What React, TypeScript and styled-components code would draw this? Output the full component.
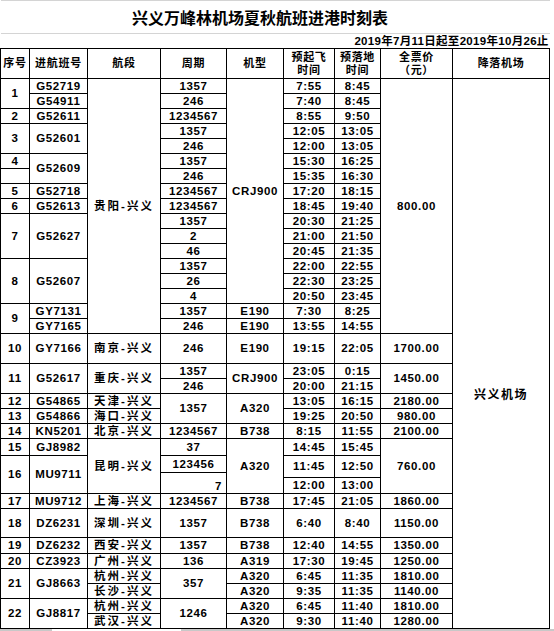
import styled, { createGlobalStyle } from 'styled-components';

const GlobalStyle = createGlobalStyle`
  html, body {
    margin: 0;
    padding: 0;
    background: #fff;
    overflow: hidden;
  }
`;

const Sheet = styled.div`
  width: 554px;
  height: 631px;
  display: flex;
  flex-direction: column;
  overflow: hidden;
  font-family: "Liberation Sans", "Noto Sans CJK SC", sans-serif;
  color: #000;
`;

const Grid = styled.table`
  border-collapse: collapse;
  table-layout: fixed;
  width: 554px;
  flex: none;
`;

const Row = styled.tr<{ $h: number }>`
  height: ${({ $h }) => $h}px;
`;

const TitleCell = styled.td`
  height: 32px;
  padding: 0 30px 0 0;
  border-top: 1px solid #d4d4d4;
  border-bottom: 1px solid #d4d4d4;
  text-align: center;
  vertical-align: middle;
  font-family: "Noto Sans CJK SC", sans-serif;
  font-size: 16px;
  font-weight: 700;
  line-height: 20px;
`;

const DateCell = styled.td`
  padding: 0 1px 0 0;
  border-bottom: 1px solid #000;
  text-align: right;
  vertical-align: middle;
  font-size: 11.5px;
  font-weight: 700;
  letter-spacing: 0.3px;
  line-height: 14px;
  white-space: nowrap;
`;

const Head = styled.th`
  padding: 0;
  border: 1px solid #000;
  text-align: center;
  vertical-align: middle;
  font-size: 11px;
  font-weight: 700;
  letter-spacing: 0.7px;
  line-height: 13px;
  white-space: pre-line;
`;

const Cell = styled.td<{ $ls?: number; $right?: boolean; $bottom?: boolean }>`
  padding: 0 ${({ $right }) => ($right ? '4px' : '0')} 0 0;
  border: 1px solid #000;
  text-align: ${({ $right }) => ($right ? 'right' : 'center')};
  vertical-align: ${({ $bottom }) => ($bottom ? 'bottom' : 'middle')};
  font-size: 11.5px;
  font-weight: 700;
  letter-spacing: ${({ $ls }) => $ls ?? 0.6}px;
  line-height: 13px;
  white-space: nowrap;
  overflow: hidden;
`;

const Landing = styled.td`
  padding: 309px 0 0 0;
  border: 1px solid #000;
  text-align: center;
  vertical-align: top;
  font-size: 12px;
  font-weight: 700;
  letter-spacing: 1.5px;
  line-height: 14px;
`;

const Spare = styled.td`
  padding: 0;
  border-right: 1px solid #d4d4d4;
`;

const Scroll = styled.div`
  flex: 1;
  display: flex;
`;

const ScrollPart = styled.div<{ $w?: number; $gray?: boolean }>`
  flex: ${({ $w }) => ($w ? `0 0 ${$w}px` : '1')};
  background: ${({ $gray }) => ($gray ? '#c8c8c8' : '#fff')};
`;

const R = 2; // letter spacing for route names

export default function App() {
  return (
    <>
      <GlobalStyle />
      <Sheet>
        <Grid>
          <colgroup>
            <col style={{ width: 29 }} />
            <col style={{ width: 58 }} />
            <col style={{ width: 73 }} />
            <col style={{ width: 66 }} />
            <col style={{ width: 57 }} />
            <col style={{ width: 51 }} />
            <col style={{ width: 46 }} />
            <col style={{ width: 72 }} />
            <col style={{ width: 97 }} />
            <col style={{ width: 5 }} />
          </colgroup>
          <tbody>
            <Row $h={33}>
              <TitleCell colSpan={9}>兴义万峰林机场夏秋航班进港时刻表</TitleCell>
              <Spare />
            </Row>
            <Row $h={15}>
              <DateCell colSpan={9}>2019年7月11日起至2019年10月26止</DateCell>
              <Spare />
            </Row>
            <Row $h={30}>
              <Head>序号</Head>
              <Head>进航班号</Head>
              <Head>航段</Head>
              <Head>周期</Head>
              <Head>机型</Head>
              <Head>{'预起飞\n时间'}</Head>
              <Head>{'预落地\n时间'}</Head>
              <Head>{'全票价\n（元）'}</Head>
              <Head>降落机场</Head>
              <Spare />
            </Row>

            <Row $h={15}>
              <Cell rowSpan={2}>1</Cell>
              <Cell>G52719</Cell>
              <Cell rowSpan={17} $ls={R}>贵阳-兴义</Cell>
              <Cell>1357</Cell>
              <Cell rowSpan={15}>CRJ900</Cell>
              <Cell>7:55</Cell>
              <Cell>8:45</Cell>
              <Cell rowSpan={17}>800.00</Cell>
              <Landing rowSpan={35}>兴义机场</Landing>
              <Spare rowSpan={35} />
            </Row>
            <Row $h={15}>
              <Cell>G54911</Cell>
              <Cell>246</Cell>
              <Cell>7:40</Cell>
              <Cell>8:45</Cell>
            </Row>
            <Row $h={15}>
              <Cell>2</Cell>
              <Cell>G52611</Cell>
              <Cell>1234567</Cell>
              <Cell>8:55</Cell>
              <Cell>9:50</Cell>
            </Row>
            <Row $h={15}>
              <Cell rowSpan={2}>3</Cell>
              <Cell rowSpan={2}>G52601</Cell>
              <Cell>1357</Cell>
              <Cell>12:05</Cell>
              <Cell>13:05</Cell>
            </Row>
            <Row $h={15}>
              <Cell>246</Cell>
              <Cell>12:00</Cell>
              <Cell>13:05</Cell>
            </Row>
            <Row $h={15}>
              <Cell>4</Cell>
              <Cell rowSpan={2}>G52609</Cell>
              <Cell>1357</Cell>
              <Cell>15:30</Cell>
              <Cell>16:25</Cell>
            </Row>
            <Row $h={15}>
              <Cell />
              <Cell>246</Cell>
              <Cell>15:35</Cell>
              <Cell>16:30</Cell>
            </Row>
            <Row $h={15}>
              <Cell>5</Cell>
              <Cell>G52718</Cell>
              <Cell>1234567</Cell>
              <Cell>17:20</Cell>
              <Cell>18:15</Cell>
            </Row>
            <Row $h={15}>
              <Cell>6</Cell>
              <Cell>G52613</Cell>
              <Cell>1234567</Cell>
              <Cell>18:45</Cell>
              <Cell>19:40</Cell>
            </Row>
            <Row $h={15}>
              <Cell rowSpan={3}>7</Cell>
              <Cell rowSpan={3}>G52627</Cell>
              <Cell>1357</Cell>
              <Cell>20:30</Cell>
              <Cell>21:25</Cell>
            </Row>
            <Row $h={15}>
              <Cell>2</Cell>
              <Cell>21:00</Cell>
              <Cell>21:50</Cell>
            </Row>
            <Row $h={15}>
              <Cell>46</Cell>
              <Cell>20:45</Cell>
              <Cell>21:35</Cell>
            </Row>
            <Row $h={15}>
              <Cell rowSpan={3}>8</Cell>
              <Cell rowSpan={3}>G52607</Cell>
              <Cell>1357</Cell>
              <Cell>22:00</Cell>
              <Cell>22:55</Cell>
            </Row>
            <Row $h={15}>
              <Cell>26</Cell>
              <Cell>22:30</Cell>
              <Cell>23:25</Cell>
            </Row>
            <Row $h={15}>
              <Cell>4</Cell>
              <Cell>20:50</Cell>
              <Cell>23:45</Cell>
            </Row>
            <Row $h={15}>
              <Cell rowSpan={2}>9</Cell>
              <Cell>GY7131</Cell>
              <Cell>1357</Cell>
              <Cell>E190</Cell>
              <Cell>7:30</Cell>
              <Cell>8:25</Cell>
            </Row>
            <Row $h={15}>
              <Cell>GY7165</Cell>
              <Cell>246</Cell>
              <Cell>E190</Cell>
              <Cell>13:55</Cell>
              <Cell>14:55</Cell>
            </Row>
            <Row $h={30}>
              <Cell>10</Cell>
              <Cell>GY7166</Cell>
              <Cell $ls={R}>南京-兴义</Cell>
              <Cell>246</Cell>
              <Cell>E190</Cell>
              <Cell>19:15</Cell>
              <Cell>22:05</Cell>
              <Cell>1700.00</Cell>
            </Row>
            <Row $h={15}>
              <Cell rowSpan={2}>11</Cell>
              <Cell rowSpan={2}>G52617</Cell>
              <Cell rowSpan={2} $ls={R}>重庆-兴义</Cell>
              <Cell>1357</Cell>
              <Cell rowSpan={2}>CRJ900</Cell>
              <Cell>23:05</Cell>
              <Cell>0:15</Cell>
              <Cell rowSpan={2}>1450.00</Cell>
            </Row>
            <Row $h={15}>
              <Cell>246</Cell>
              <Cell>20:00</Cell>
              <Cell>21:15</Cell>
            </Row>
            <Row $h={15}>
              <Cell>12</Cell>
              <Cell>G54865</Cell>
              <Cell $ls={R}>天津-兴义</Cell>
              <Cell rowSpan={2}>1357</Cell>
              <Cell rowSpan={2}>A320</Cell>
              <Cell>13:05</Cell>
              <Cell>16:15</Cell>
              <Cell>2180.00</Cell>
            </Row>
            <Row $h={15}>
              <Cell>13</Cell>
              <Cell>G54866</Cell>
              <Cell $ls={R}>海口-兴义</Cell>
              <Cell>19:25</Cell>
              <Cell>20:50</Cell>
              <Cell>980.00</Cell>
            </Row>
            <Row $h={15}>
              <Cell>14</Cell>
              <Cell>KN5201</Cell>
              <Cell $ls={R}>北京-兴义</Cell>
              <Cell>1234567</Cell>
              <Cell>B738</Cell>
              <Cell>8:15</Cell>
              <Cell>11:55</Cell>
              <Cell>2100.00</Cell>
            </Row>
            <Row $h={17}>
              <Cell>15</Cell>
              <Cell>GJ8982</Cell>
              <Cell rowSpan={4} $ls={R}>昆明-兴义</Cell>
              <Cell>37</Cell>
              <Cell rowSpan={4}>A320</Cell>
              <Cell>14:45</Cell>
              <Cell>15:45</Cell>
              <Cell rowSpan={4}>760.00</Cell>
            </Row>
            <Row $h={17}>
              <Cell rowSpan={3}>16</Cell>
              <Cell rowSpan={3}>MU9711</Cell>
              <Cell>123456</Cell>
              <Cell rowSpan={2}>11:45</Cell>
              <Cell rowSpan={2}>12:50</Cell>
            </Row>
            <Row $h={5}>
              <Cell rowSpan={2} $right $bottom>7</Cell>
            </Row>
            <Row $h={16}>
              <Cell>12:00</Cell>
              <Cell>13:00</Cell>
            </Row>
            <Row $h={15}>
              <Cell>17</Cell>
              <Cell>MU9712</Cell>
              <Cell $ls={R}>上海-兴义</Cell>
              <Cell>1234567</Cell>
              <Cell>B738</Cell>
              <Cell>17:45</Cell>
              <Cell>21:05</Cell>
              <Cell>1860.00</Cell>
            </Row>
            <Row $h={29}>
              <Cell>18</Cell>
              <Cell>DZ6231</Cell>
              <Cell $ls={R}>深圳-兴义</Cell>
              <Cell>1357</Cell>
              <Cell>B738</Cell>
              <Cell>6:40</Cell>
              <Cell>8:40</Cell>
              <Cell>1150.00</Cell>
            </Row>
            <Row $h={16}>
              <Cell>19</Cell>
              <Cell>DZ6232</Cell>
              <Cell $ls={R}>西安-兴义</Cell>
              <Cell>1357</Cell>
              <Cell>B738</Cell>
              <Cell>12:40</Cell>
              <Cell>14:55</Cell>
              <Cell>1350.00</Cell>
            </Row>
            <Row $h={15}>
              <Cell>20</Cell>
              <Cell>CZ3923</Cell>
              <Cell $ls={R}>广州-兴义</Cell>
              <Cell>136</Cell>
              <Cell>A319</Cell>
              <Cell>17:30</Cell>
              <Cell>19:45</Cell>
              <Cell>1250.00</Cell>
            </Row>
            <Row $h={15}>
              <Cell rowSpan={2}>21</Cell>
              <Cell rowSpan={2}>GJ8663</Cell>
              <Cell $ls={R}>杭州-兴义</Cell>
              <Cell rowSpan={2}>357</Cell>
              <Cell>A320</Cell>
              <Cell>6:45</Cell>
              <Cell>11:35</Cell>
              <Cell>1810.00</Cell>
            </Row>
            <Row $h={15}>
              <Cell $ls={R}>长沙-兴义</Cell>
              <Cell>A320</Cell>
              <Cell>9:35</Cell>
              <Cell>11:35</Cell>
              <Cell>1140.00</Cell>
            </Row>
            <Row $h={15}>
              <Cell rowSpan={2}>22</Cell>
              <Cell rowSpan={2}>GJ8817</Cell>
              <Cell $ls={R}>杭州-兴义</Cell>
              <Cell rowSpan={2}>1246</Cell>
              <Cell>A320</Cell>
              <Cell>6:45</Cell>
              <Cell>11:40</Cell>
              <Cell>1810.00</Cell>
            </Row>
            <Row $h={15}>
              <Cell $ls={R}>武汉-兴义</Cell>
              <Cell>A320</Cell>
              <Cell>9:30</Cell>
              <Cell>11:40</Cell>
              <Cell>1280.00</Cell>
            </Row>
          </tbody>
        </Grid>
        <Scroll>
          <ScrollPart $w={52} $gray />
          <ScrollPart $w={129} />
          <ScrollPart $gray />
        </Scroll>
      </Sheet>
    </>
  );
}
